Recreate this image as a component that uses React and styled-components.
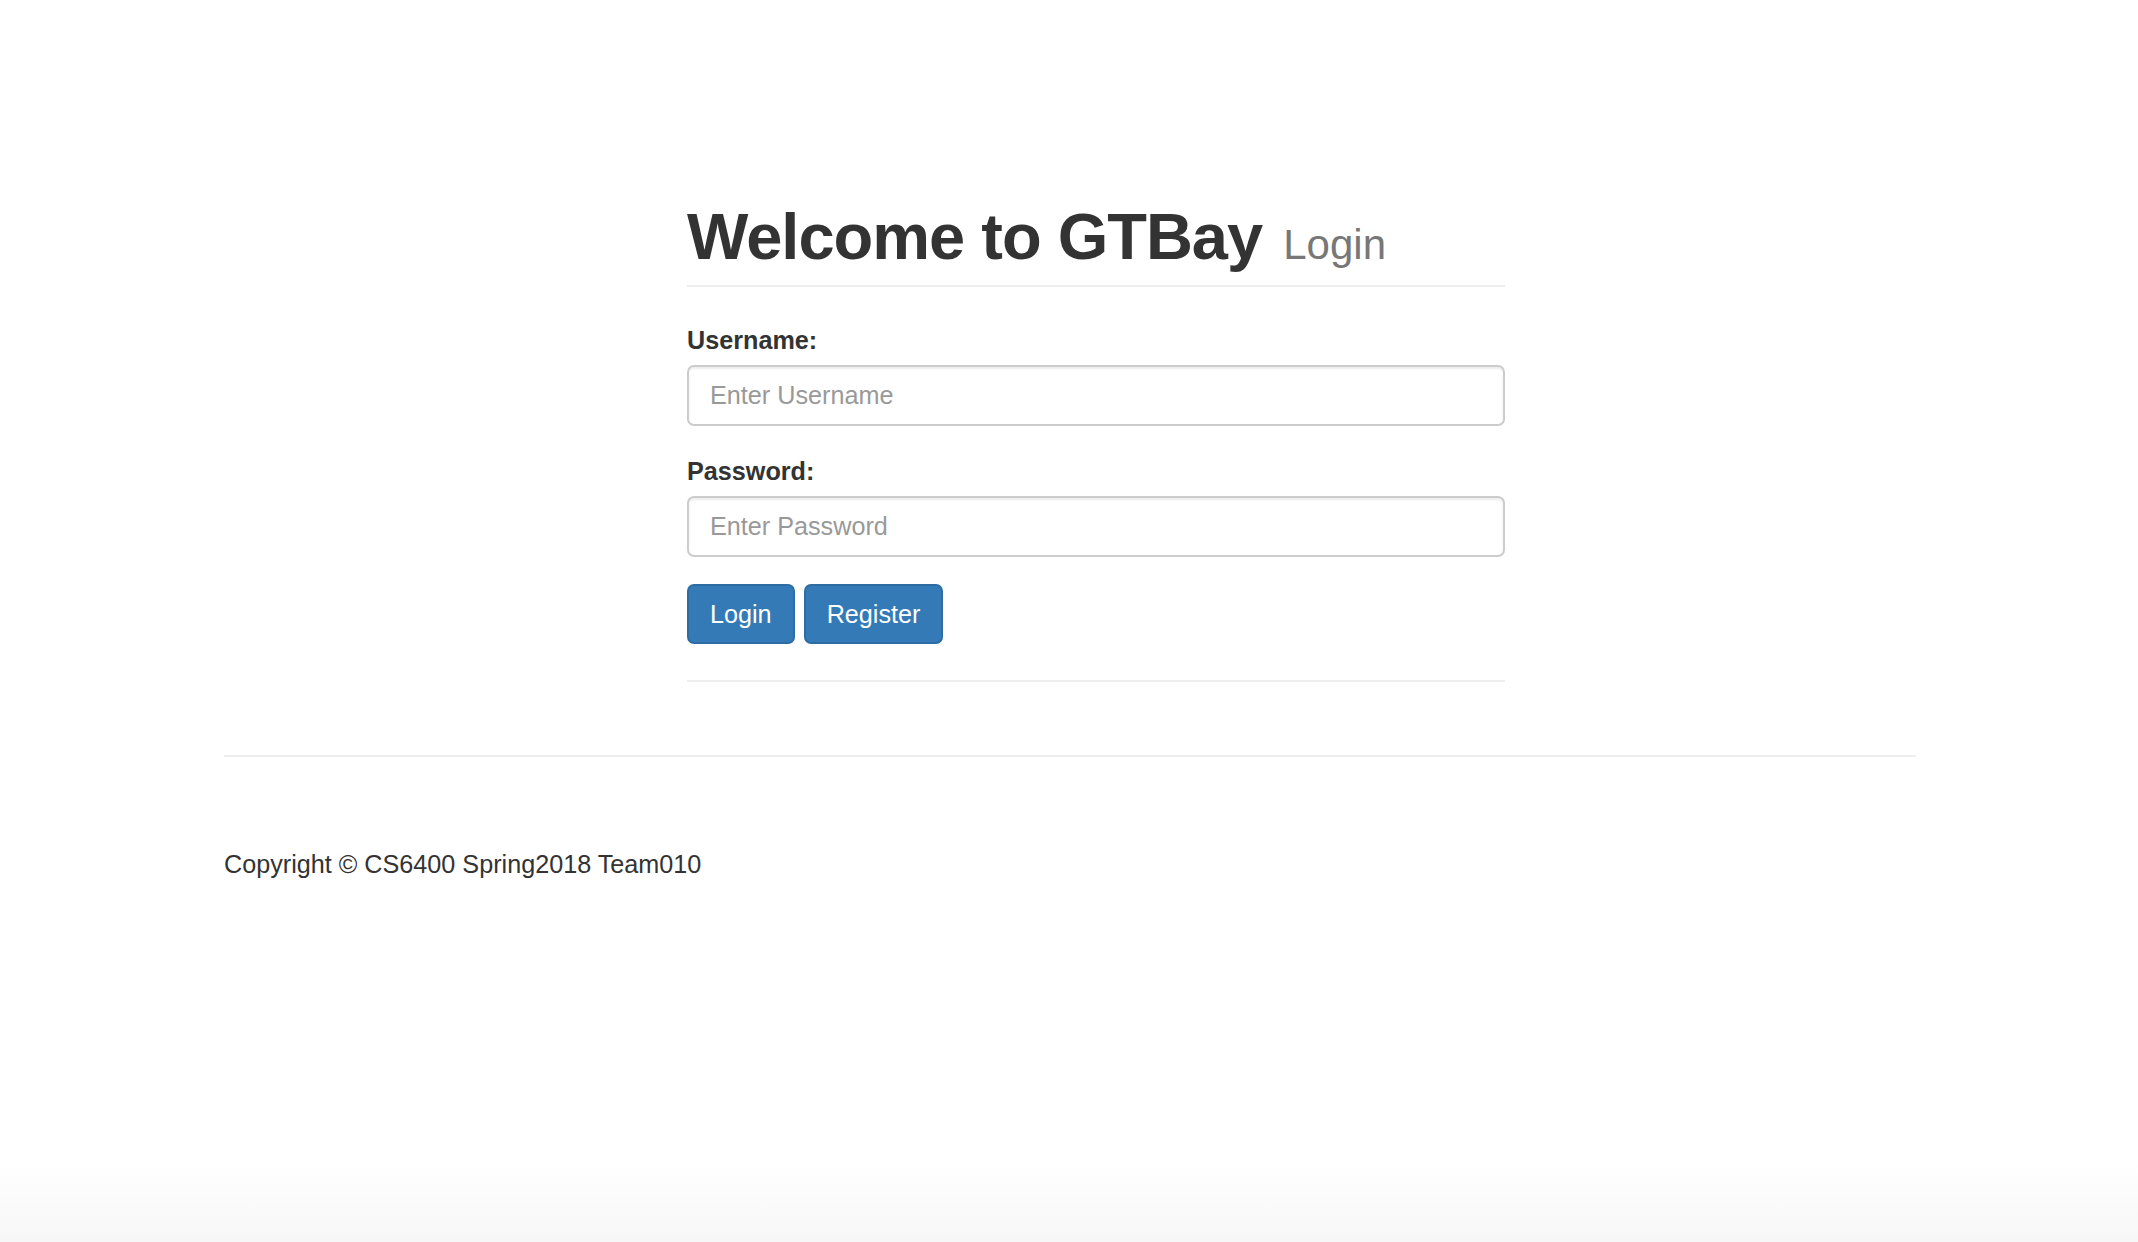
import React from "react";
import styled, { createGlobalStyle } from "styled-components";

const Global = createGlobalStyle`
  html, body { margin: 0; padding: 0; }
  body {
    font-family: "Liberation Sans", Arial, Helvetica, sans-serif;
    color: #333;
    font-size: 25.2px;
    line-height: 36px;
    background: #fff;
  }
  * { box-sizing: border-box; }
`;

const Page = styled.div`
  min-height: 100vh;
  background: linear-gradient(to bottom, #fff calc(100% - 80px), #f7f7f7 100%);
  display: flex;
  flex-direction: column;
`;

const FormColumn = styled.div`
  width: 818px;
  margin-left: 687px;
  padding-top: 201px;
`;

const Header = styled.div`
  border-bottom: 2px solid #eee;
  padding-bottom: 4px;
  margin-bottom: 35px;
`;

const Title = styled.h1`
  margin: 0;
  font-size: 65px;
  line-height: 71.5px;
  font-weight: 700;
  color: #333;
  letter-spacing: -1px;
`;

const Sub = styled.small`
  font-size: 42px;
  font-weight: 400;
  color: #777;
  letter-spacing: 0;
  margin-left: 4px;
`;

const FormGroup = styled.div`
  margin-bottom: 27px;
`;

const Label = styled.label`
  display: block;
  font-weight: 700;
  margin-bottom: 7px;
  color: #333;
`;

const Input = styled.input`
  display: block;
  width: 100%;
  height: 61px;
  padding: 10px 21px;
  font-family: inherit;
  font-size: 25.2px;
  color: #555;
  background: #fff;
  border: 2px solid #ccc;
  border-radius: 7px;
  box-shadow: inset 0 2px 2px rgba(0, 0, 0, 0.075);
  outline: none;
  &::placeholder { color: #999; }
`;

const Buttons = styled.div`
  display: flex;
  gap: 9px;
`;

const Button = styled.button`
  font-family: inherit;
  font-size: 25.2px;
  line-height: 36px;
  padding: 10px 21px;
  color: #fff;
  background: #337ab7;
  border: 2px solid #2e6da4;
  border-radius: 7px;
  cursor: pointer;
`;

const Rule = styled.hr`
  margin: 36px 0 0;
  border: 0;
  border-top: 2px solid #eee;
`;

const FooterRule = styled.hr`
  width: 1692px;
  margin: 73px 0 0 224px;
  border: 0;
  border-top: 2px solid #eee;
`;

const Copyright = styled.p`
  margin: 89px 0 0 224px;
  color: #333;
`;

export default function App() {
  return (
    <>
      <Global />
      <Page>
        <FormColumn>
          <Header>
            <Title>
              Welcome to GTBay <Sub>Login</Sub>
            </Title>
          </Header>
          <form onSubmit={(e) => e.preventDefault()}>
            <FormGroup>
              <Label htmlFor="username">Username:</Label>
              <Input id="username" type="text" placeholder="Enter Username" />
            </FormGroup>
            <FormGroup>
              <Label htmlFor="password">Password:</Label>
              <Input id="password" type="password" placeholder="Enter Password" />
            </FormGroup>
            <Buttons>
              <Button type="submit">Login</Button>
              <Button type="button">Register</Button>
            </Buttons>
          </form>
          <Rule />
        </FormColumn>
        <FooterRule />
        <Copyright>Copyright © CS6400 Spring2018 Team010</Copyright>
      </Page>
    </>
  );
}
